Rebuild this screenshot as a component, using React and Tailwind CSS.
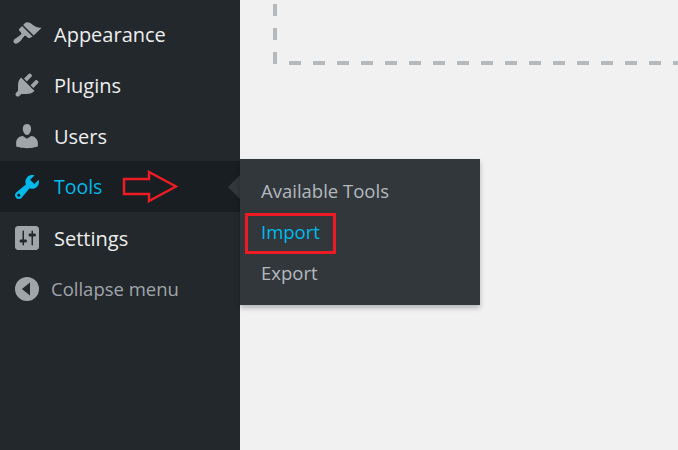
const iconPaths = {
  appearance:
    "M14.48 11.06L7.41 3.99l1.5-1.5c.5-.56 2.3-.47 3.51.32 1.21.8 1.43 1.28 2.91 2.1 1.18.64 2.45 1.26 4.45.85zm-.71.71L6.7 4.7 4.93 6.47c-.39.39-.39 1.02 0 1.41l1.06 1.06c.39.39.39 1.03 0 1.42-.6.6-1.43 1.11-2.21 1.69-.35.26-.7.53-1.01.84C1.43 13.23.4 14.97 1.46 16.04c1.06 1.06 2.8.03 4.14-1.31.31-.31.58-.66.85-1.01.57-.78 1.08-1.61 1.69-2.21.39-.39 1.02-.39 1.41 0l1.06 1.06c.39.39 1.02.39 1.41 0z",
  plugins:
    "M13.11 4.36L9.87 7.6 8 5.73l3.24-3.24c.35-.34 1.05-.2 1.56.32.52.51.66 1.21.31 1.55zm-8 1.77l.91-1.12 9.01 9.01-1.19.84c-.71.71-2.63 1.16-3.82 1.16H6.14L4.9 17.26c-.59.59-1.54.59-2.12 0-.59-.58-.59-1.53 0-2.12l1.24-1.24v-3.88c0-1.13.4-3.19 1.09-3.89zm7.26 3.97l3.24-3.24c.34-.35 1.04-.21 1.55.31.52.51.66 1.21.31 1.55l-3.24 3.25z",
  users:
    "M10 9.25c-2.27 0-2.73-3.44-2.73-3.44C7 4.02 7.82 2 9.97 2c2.16 0 2.98 2.02 2.71 3.81 0 0-.41 3.44-2.68 3.44zm0 2.57L12.72 10c2.39 0 4.52 2.33 4.52 4.53v2.49s-3.65 1.13-7.24 1.13c-3.65 0-7.24-1.13-7.24-1.13v-2.49c0-2.25 1.94-4.48 4.47-4.48z",
  tools:
    "M16.68 9.77c-1.34 1.34-3.3 1.67-4.95.99l-5.41 6.52c-.99.99-2.59.99-3.58 0s-.99-2.59 0-3.57l6.52-5.42c-.68-1.65-.35-3.61.99-4.95 1.28-1.28 3.12-1.62 4.72-1.06l-2.89 2.89 2.82 2.82 2.86-2.87c.53 1.58.18 3.39-1.08 4.65zM3.81 16.21c.4.39 1.04.39 1.43 0 .4-.4.4-1.04 0-1.44-.39-.39-1.03-.39-1.43 0-.39.4-.39 1.04 0 1.44z",
  settings:
    "M18 16V4c0-1.1-.9-2-2-2H4c-1.1 0-2 .9-2 2v12c0 1.1.9 2 2 2h12c1.1 0 2-.9 2-2zM8 11h1c.55 0 1 .45 1 1s-.45 1-1 1H8v1.5c0 .28-.22.5-.5.5s-.5-.22-.5-.5V13H6c-.55 0-1-.45-1-1s.45-1 1-1h1V5.5c0-.28.22-.5.5-.5s.5.22.5.5V11zm5-2h-1c-.55 0-1-.45-1-1s.45-1 1-1h1V5.5c0-.28.22-.5.5-.5s.5.22.5.5V7h1c.55 0 1 .45 1 1s-.45 1-1 1h-1v5.5c0 .28-.22.5-.5.5s-.5-.22-.5-.5V9z",
  collapse:
    "M10 2a8 8 0 1 0 0 16a8 8 0 1 0 0-16zM12 5.6v8.8L6.6 10z",
};

const Icon = ({ name, className }) => (
  <svg viewBox="0 0 20 20" className={`w-[30px] h-[30px] shrink-0 fill-current ${className}`}>
    <path fillRule="evenodd" d={iconPaths[name]} />
  </svg>
);

const MenuItem = ({ icon, label }) => (
  <li className="h-[51px] flex items-center pl-[12px] text-[#eeeeee]">
    <Icon name={icon} className="text-[#a0a5aa]" />
    <span className="ml-[12px] pt-[2px]">{label}</span>
  </li>
);

const App = () => {
  return (
    <div className="flex w-[678px] h-[450px] overflow-hidden bg-[#f1f1f1] font-['Open_Sans',sans-serif] text-[20px]">
      {/* Sidebar */}
      <aside className="w-[240px] shrink-0 bg-[#23282d]">
        <ul className="pt-[8px]">
          <MenuItem icon="appearance" label="Appearance" />
          <MenuItem icon="plugins" label="Plugins" />
          <MenuItem icon="users" label="Users" />

          {/* Active item with flyout */}
          <li className="relative h-[51px] flex items-center pl-[12px] bg-[#191e23] text-[#00b9eb]">
            <Icon name="tools" />
            <span className="ml-[12px] text-[19.5px]">Tools</span>

            <svg viewBox="0 0 56 33" className="absolute left-[122px] top-[9px] w-[56px] h-[33px]">
              <path d="M2 9H27V2L54 16.5L27 31V24H2z" fill="none" stroke="#ed1c24" strokeWidth="2.5" />
            </svg>

            <div className="absolute left-[228px] top-[14px] border-y-[12px] border-r-[12px] border-y-transparent border-r-[#32373c]" />

            <div className="absolute left-[240px] top-[-2px] z-10 w-[240px] pt-[12px] pb-[11px] bg-[#32373c] shadow-[0_3px_5px_rgba(0,0,0,0.25)] text-[18.5px] text-[#b4b9be]">
              <div className="h-[41px] flex items-center pl-[21px] pb-[2px]">Available Tools</div>
              <div className="relative h-[41px] flex items-center pl-[21px] pb-[2px] text-[#00b9eb]">
                Import
                <div className="absolute left-[5px] top-[1px] w-[91px] h-[41px] border-[3px] border-[#ed1c24]" />
              </div>
              <div className="h-[41px] flex items-center pl-[21px] pb-[2px]">Export</div>
            </div>
          </li>

          <MenuItem icon="settings" label="Settings" />

          <li className="h-[51px] flex items-center pl-[12px] text-[#a0a5aa]">
            <Icon name="collapse" />
            <span className="ml-[9px] text-[18.5px]">Collapse menu</span>
          </li>
        </ul>
      </aside>

      {/* Main content, dashed drop area corner */}
      <main className="flex-1 pl-[33px]">
        <svg className="w-[405px] h-[65px]" viewBox="0 0 405 65">
          <path d="M2 4V65" stroke="#b4b9be" strokeWidth="4" strokeDasharray="12 12" fill="none" />
          <path d="M16 63H405" stroke="#b4b9be" strokeWidth="4" strokeDasharray="12 12" fill="none" />
        </svg>
      </main>
    </div>
  );
};

export default App;
